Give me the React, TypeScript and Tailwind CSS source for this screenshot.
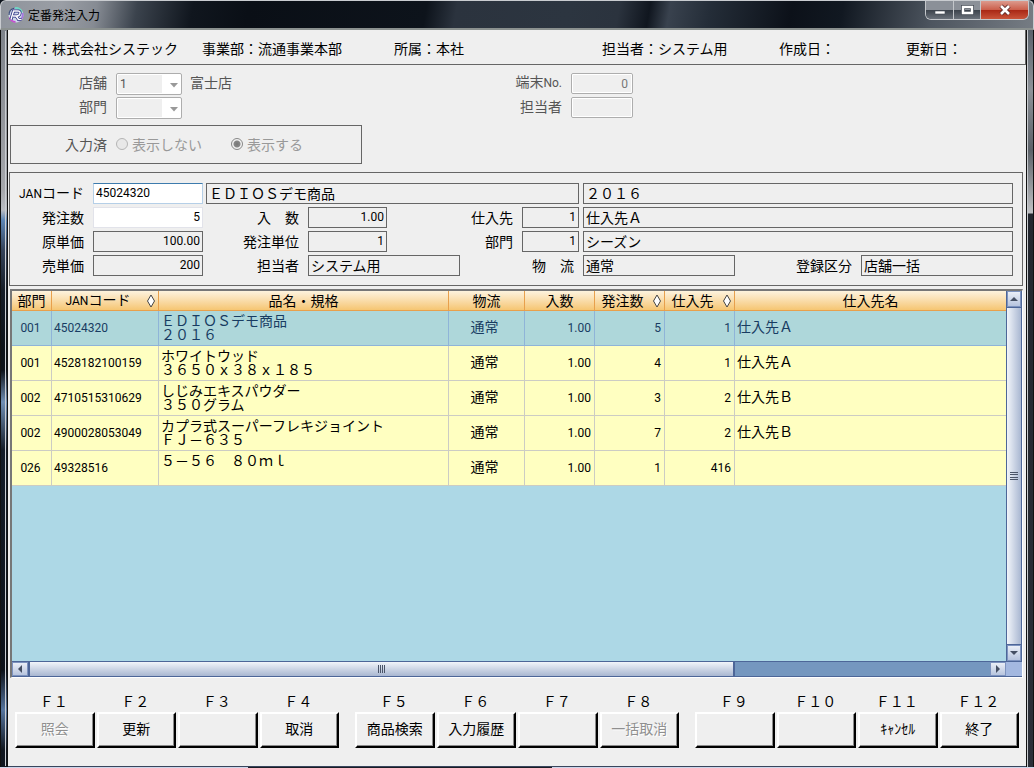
import type { ReactNode } from 'react'

type Row = {
  dept: string
  jan: string
  name: string
  spec: string
  route: string
  pack: string
  qty: string
  supplier: string
  supplierName: string
}

type FunctionKey = { key: string; label?: string; disabled?: boolean }

const rows: Row[] = [
  { dept: '001', jan: '45024320', name: 'ＥＤＩＯＳデモ商品', spec: '２０１６', route: '通常', pack: '1.00', qty: '5', supplier: '1', supplierName: '仕入先Ａ' },
  { dept: '001', jan: '4528182100159', name: 'ホワイトウッド', spec: '３６５０ｘ３８ｘ１８５', route: '通常', pack: '1.00', qty: '4', supplier: '1', supplierName: '仕入先Ａ' },
  { dept: '002', jan: '4710515310629', name: 'しじみエキスパウダー', spec: '３５０グラム', route: '通常', pack: '1.00', qty: '3', supplier: '2', supplierName: '仕入先Ｂ' },
  { dept: '002', jan: '4900028053049', name: 'カプラ式スーパーフレキジョイント', spec: 'ＦＪ－６３５', route: '通常', pack: '1.00', qty: '7', supplier: '2', supplierName: '仕入先Ｂ' },
  { dept: '026', jan: '49328516', name: '５－５６　８０ｍｌ', spec: '', route: '通常', pack: '1.00', qty: '1', supplier: '416', supplierName: '' },
]

const columns = [
  { label: '部門' },
  { label: 'JANコード', sortable: true },
  { label: '品名・規格' },
  { label: '物流' },
  { label: '入数' },
  { label: '発注数', sortable: true },
  { label: '仕入先', sortable: true },
  { label: '仕入先名' },
]

const functionKeys: FunctionKey[][] = [
  [{ key: 'Ｆ１', label: '照会', disabled: true }, { key: 'Ｆ２', label: '更新' }, { key: 'Ｆ３' }, { key: 'Ｆ４', label: '取消' }],
  [{ key: 'Ｆ５', label: '商品検索' }, { key: 'Ｆ６', label: '入力履歴' }, { key: 'Ｆ７' }, { key: 'Ｆ８', label: '一括取消', disabled: true }],
  [{ key: 'Ｆ９' }, { key: 'Ｆ１０' }, { key: 'Ｆ１１', label: 'ｷｬﾝｾﾙ' }, { key: 'Ｆ１２', label: '終了' }],
]

const num = "font-['Roboto',sans-serif] text-[12px]"
const wideInput = 'h-[21px] border border-[#666] px-0.5 pb-0.5'

function App() {
  return (
    <div className="flex min-h-screen flex-col bg-[#0d131b] font-['Noto_Sans_CJK_JP',sans-serif] text-[14px] leading-[14px] text-black">
      <TitleBar />
      <div className="flex flex-1">
        <div className="w-2 border-x border-[#111] bg-[linear-gradient(to_bottom,#7d828a_0px,#a5a7ab_160px,#b9bcc2_180px,#5d86b5_190px,#34435a_220px,#161d28_260px,#0c1119_320px,#0c1119_340px,#6f8eb4_372px,#141c28_420px,#0c1119_640px,#55749e_680px,#10161f_720px)] p-px">
          <div className="h-full border-r border-[#c9ccd0]" />
        </div>
        <main className="flex min-w-0 flex-1 flex-col border-b border-[#39455c] bg-[#efefef]">
          <CompanyBar />
          <StoreFilter />
          <ItemForm />
          <OrderTable />
          <FunctionBar />
        </main>
        <div className="flex w-2 border-x border-[#111] bg-[linear-gradient(to_bottom,#5a626b_0px,#8d9299_60px,#5c6269_120px,#c0c1c4_183px,#23272f_184px,#2b2f38_100%)]">
          <div className="w-px bg-[#c9ccd0]" />
        </div>
      </div>
      <div className="flex h-px bg-[#cdd6ea] pl-[248px]">
        <div className="w-[304px] bg-[#1a1d26]" />
      </div>
    </div>
  )
}

function TitleBar() {
  return (
    <header className="flex h-[30px] items-start rounded-t-md border border-b-2 border-[#c9ccd0] border-b-[#8b918f] bg-[linear-gradient(100deg,#8f949c_0px,#9a9ea5_60px,#868b93_95px,#3b434d_135px,#10161e_190px,#0a0f16_245px,#0d131b_420px,#2b333e_450px,#2c3540_560px,#2b333e_610px,#10161f_640px,#39424e_660px,#242d38_700px,#0c1119_780px,#111821_830px,#4d555f_920px,#7b8188_1034px)]">
      <div className="flex h-7 flex-1 items-center gap-1 pl-[7px]">
        <AppIcon />
        <h1 className="text-[12px] leading-4">定番発注入力</h1>
      </div>
      <div className="mr-1 flex h-[19px] overflow-hidden rounded-b-md border border-t-0 border-[#c3c6ca]">
        <button type="button" aria-label="最小化" className="flex w-7 items-center justify-center border-r border-[#c3c6ca] bg-[linear-gradient(#8b9098_50%,#3b424b_50%,#6a717a)]">
          <svg width="14" height="12" viewBox="0 0 14 12"><path d="M2 7h10v3H2z" fill="#fff" stroke="#454b55" strokeWidth=".6" /></svg>
        </button>
        <button type="button" aria-label="最大化" className="flex w-[27px] items-center justify-center border-r border-[#c3c6ca] bg-[linear-gradient(#8b9098_50%,#3b424b_50%,#6a717a)]">
          <svg width="14" height="12" viewBox="0 0 14 12">
            <path d="M3 3h9v6H3z" fill="none" stroke="#454b55" strokeWidth="4" />
            <path d="M3 3h9v6H3z" fill="none" stroke="#fff" strokeWidth="2.400" />
          </svg>
        </button>
        <button type="button" aria-label="閉じる" className="flex w-[47px] items-center justify-center bg-[linear-gradient(#dc9a8d_0%,#cb5d49_50%,#a82614_50%,#c9543a)]">
          <svg width="14" height="12" viewBox="0 0 14 12">
            <path d="M3 2l8 8M11 2l-8 8" stroke="#5b2a28" strokeWidth="4.500" />
            <path d="M3 2l8 8M11 2l-8 8" stroke="#fff" strokeWidth="2.600" />
          </svg>
        </button>
      </div>
    </header>
  )
}

function AppIcon() {
  return (
    <svg width="16" height="16" viewBox="0 0 16 16" aria-hidden="true">
      <circle cx="8" cy="8" r="7.500" fill="#cfd9ea" />
      <path d="M1 8a7 7 0 0 1 5.500-6.800" fill="none" stroke="#3d4f7c" strokeWidth="1.200" />
      <path d="M7 1a7 7 0 0 1 7 4.500" fill="none" stroke="#6fd6c4" strokeWidth="1.800" />
      <path d="M14.500 6a7 7 0 0 1-4 8" fill="none" stroke="#a678e0" strokeWidth="2" />
      <path d="M1.500 10.500a7 7 0 0 0 6 4.500" fill="none" stroke="#c44fd0" strokeWidth="1.800" />
      <path d="M3 12.500L5.500 4H10q2.500 0 2 2.500T8.500 9H5M8 9l2.500 3.500h3" fill="none" stroke="#23277d" strokeWidth="3" />
      <path d="M3 12.500L5.500 4H10q2.500 0 2 2.500T8.500 9H5M8 9l2.500 3.500h3" fill="none" stroke="#fff" strokeWidth="1.500" />
    </svg>
  )
}

function CompanyBar() {
  return (
    <div className="grid h-[35px] grid-cols-[192px_192px_208px_177px_127px_1fr] items-center border-r border-b border-[#666] pt-0.5 pl-0.5 whitespace-nowrap">
      <span>会社：株式会社システック</span>
      <span>事業部：流通事業本部</span>
      <span>所属：本社</span>
      <span>担当者：システム用</span>
      <span>作成日：</span>
      <span>更新日：</span>
    </div>
  )
}

function StoreFilter() {
  return (
    <section className="px-0.5 pt-2 text-[#555]">
      <div className="flex">
        <div className="w-[463px] space-y-0.5">
          <div className="flex items-center">
            <label htmlFor="store" className="w-[97px] pb-1 text-right">店舗</label>
            <DisabledSelect id="store" value="1" />
            <span className="ml-2 pb-1">富士店</span>
          </div>
          <div className="flex items-center">
            <label htmlFor="filter-dept" className="w-[97px] pb-1 text-right">部門</label>
            <DisabledSelect id="filter-dept" value="" />
          </div>
        </div>
        <div className="space-y-[3px]">
          <div className="flex items-center">
            <label htmlFor="terminal" className="w-[89px] pb-1 text-right">端末<span className={num}>No.</span></label>
            <input id="terminal" disabled defaultValue="0" className={`${num} ml-[9px] h-[21px] w-[62px] rounded-xs border border-[#adadad] px-1 text-right text-[#777] outline-1 -outline-offset-2 outline-white`} />
          </div>
          <div className="flex items-center">
            <label htmlFor="terminal-user" className="w-[89px] pb-1 text-right">担当者</label>
            <input id="terminal-user" disabled className="ml-[9px] h-[21px] w-[62px] rounded-xs border border-[#adadad] px-1 outline-1 -outline-offset-2 outline-white" />
          </div>
        </div>
      </div>

      <fieldset disabled className="mt-1.5 flex h-[39px] w-[352px] items-center border border-[#666] pb-0.5">
        <span className="w-24 text-right">入力済</span>
        <label className="ml-[9px] flex w-[115px] items-center gap-1 text-[#999]">
          <DisabledRadio />
          表示しない
        </label>
        <label className="flex items-center gap-1 text-[#999]">
          <DisabledRadio checked />
          表示する
        </label>
      </fieldset>
    </section>
  )
}

function DisabledSelect({ id, value }: { id: string; value: string }) {
  return (
    <div className="relative ml-[9px]">
      <select id={id} disabled defaultValue={value} className="block h-[22px] w-[66px] appearance-none rounded-xs border border-[#adadad] bg-white p-0.5 text-transparent opacity-100">
        <option value={value}>{value}</option>
      </select>
      <div className="pointer-events-none absolute top-0.5 left-0.5 flex h-[18px] w-11 items-center bg-[#efefef] pl-0.5">
        <span aria-hidden="true" className={num}>{value}</span>
      </div>
      <svg className="pointer-events-none absolute top-2.5 right-1" width="8" height="5" viewBox="0 0 8 5"><path d="M0 0h8L4 4.500z" fill="#999" /></svg>
    </div>
  )
}

function DisabledRadio({ checked = false }: { checked?: boolean }) {
  return (
    <input
      type="radio"
      name="entered"
      defaultChecked={checked}
      className="size-3 appearance-none rounded-full border border-[#b5b5b5] bg-[#e8e8e8] checked:border-[#888] checked:bg-[radial-gradient(circle,#777_0px,#888_3px,#f2f2f2_4px)]"
    />
  )
}

function ItemForm() {
  return (
    <section className="mt-2 mr-[3px] ml-px space-y-[3px] border border-[#666] pt-2.5 pr-[9px] pb-[9px] whitespace-nowrap">
      <div className="flex">
        <Field id="jan" labelClass="w-[74px]" boxClass="w-[110px]" label={<><span className={num}>JAN</span>コード</>} value="45024320" numeric editable focused />
        <input aria-label="商品名" readOnly defaultValue="ＥＤＩＯＳデモ商品" className={`${wideInput} ml-[3px] w-[373px]`} />
        <input aria-label="規格" readOnly defaultValue="２０１６" className={`${wideInput} ml-1 min-w-0 flex-1`} />
      </div>
      <div className="flex">
        <Field id="qty" labelClass="w-[74px]" boxClass="w-[110px]" label="発注数" value="5" numeric right editable />
        <Field id="pack" labelClass="w-24" boxClass="w-[79px]" label="入　数" value="1.00" numeric right />
        <Field id="supplier" labelClass="w-[126px]" boxClass="w-[57px]" label="仕入先" value="1" numeric right />
        <input aria-label="仕入先名" readOnly defaultValue="仕入先Ａ" className={`${wideInput} ml-1 min-w-0 flex-1`} />
      </div>
      <div className="flex">
        <Field id="cost" labelClass="w-[74px]" boxClass="w-[110px]" label="原単価" value="100.00" numeric right />
        <Field id="unit" labelClass="w-24" boxClass="w-[79px]" label="発注単位" value="1" numeric right />
        <Field id="dept" labelClass="w-[126px]" boxClass="w-[57px]" label="部門" value="1" numeric right />
        <input aria-label="部門名" readOnly defaultValue="シーズン" className={`${wideInput} ml-1 min-w-0 flex-1`} />
      </div>
      <div className="flex">
        <Field id="price" labelClass="w-[74px]" boxClass="w-[110px]" label="売単価" value="200" numeric right />
        <Field id="staff" labelClass="w-24" boxClass="w-[152px]" label="担当者" value="システム用" />
        <Field id="route" labelClass="w-[114px]" boxClass="w-[152px]" label="物　流" value="通常" />
        <div className="flex flex-1 justify-end">
          <Field id="kind" labelClass="w-20" boxClass="w-[152px]" label="登録区分" value="店舗一括" />
        </div>
      </div>
    </section>
  )
}

type FieldProps = {
  id: string
  label: ReactNode
  value: string
  labelClass: string
  boxClass: string
  numeric?: boolean
  right?: boolean
  editable?: boolean
  focused?: boolean
}

function Field({ id, label, value, labelClass, boxClass, numeric, right, editable, focused }: FieldProps) {
  const border = focused ? 'border-[#b5cfe7] border-t-[#3d7bad] bg-white' : editable ? 'border-[#e2e3ea] bg-white' : 'border-[#666]'
  return (
    <>
      <label htmlFor={id} className={`${labelClass} mr-[9px] self-center pb-0.5 text-right`}>{label}</label>
      <input
        id={id}
        readOnly={!editable}
        defaultValue={value}
        className={`${boxClass} ${border} ${numeric ? num : ''} ${right ? 'text-right' : ''} h-[21px] border px-0.5 pb-0.5`}
      />
    </>
  )
}

function OrderTable() {
  return (
    <section className="mt-[3px] mr-[3px] ml-0.5 flex h-[389px] flex-col border-t-2 border-r border-b border-l-2 border-t-[#777] border-r-white border-b-white border-l-[#777]">
      <div className="flex min-h-0 flex-1">
        <div className="min-w-0 flex-1 bg-[#add8e6]">
          <table className="w-full table-fixed border-separate border-spacing-0 whitespace-nowrap">
            <colgroup>
              <col className="w-10" />
              <col className="w-[107px]" />
              <col className="w-[290px]" />
              <col className="w-[76px]" />
              <col className="w-[70px]" />
              <col className="w-[70px]" />
              <col className="w-[70px]" />
              <col />
            </colgroup>
            <thead>
              <tr className="h-5 bg-linear-to-b from-[#fdf3de] to-[#f5c36b]">
                {columns.map((column) => (
                  <th key={column.label} className="border-r border-b border-[#e8a04c] p-0 font-normal last:border-r-0">
                    <div className="flex h-[18px] items-center justify-center pb-0.5">
                      <span className={column.sortable ? 'flex-1' : ''}>
                        {column.label === 'JANコード' ? <><span className={num}>JAN</span>コード</> : column.label}
                      </span>
                      {column.sortable && <SortMark />}
                    </div>
                  </th>
                ))}
              </tr>
            </thead>
            <tbody>
              {rows.map((row, index) => (
                <tr
                  key={row.jan}
                  className={index === 0 ? 'h-[35px] bg-[#aed7da] text-[#183c62] [&>td]:border-[#8fb4d8]' : 'h-[35px] bg-[#ffffc1] [&>td]:border-[#ccccc4]'}
                >
                  <td className={`${num} border-r border-b p-0 pr-0.5 text-center`}>{row.dept}</td>
                  <td className={`${num} border-r border-b p-0 pl-0.5`}>{row.jan}</td>
                  <td className="border-r border-b p-0 pl-0.5 align-top">
                    <div className="pt-0.5">{row.name}</div>
                    <div>{row.spec}</div>
                  </td>
                  <td className="border-r border-b p-0 pr-1 pb-1 text-center">{row.route}</td>
                  <td className={`${num} border-r border-b p-0 pr-[3px] text-right`}>{row.pack}</td>
                  <td className={`${num} border-r border-b p-0 pr-[3px] text-right`}>{row.qty}</td>
                  <td className={`${num} border-r border-b p-0 pr-[3px] text-right`}>{row.supplier}</td>
                  <td className="border-b p-0 pb-1 pl-0.5">{row.supplierName}</td>
                </tr>
              ))}
            </tbody>
          </table>
        </div>
        <div className="flex w-4 flex-col border-x border-[#4d6698] bg-[#7597bf]">
          <ScrollButton label="上へ" path="M3 9l4-4 4 4z" />
          <div className="flex flex-1 items-center justify-center border-y border-[#4d6698] bg-linear-to-r from-[#f2f5fa] to-[#a9b7d1]">
            <div className="flex h-2 w-2 flex-col justify-between">
              <div className="h-px bg-[#4a5468]" />
              <div className="h-px bg-[#4a5468]" />
              <div className="h-px bg-[#4a5468]" />
              <div className="h-px bg-[#4a5468]" />
            </div>
          </div>
          <ScrollButton label="下へ" path="M3 5l4 4 4-4z" />
        </div>
      </div>
      <div className="flex h-4 border-y border-[#4d6698] bg-[#7597bf]">
        <ScrollButton label="左へ" path="M9 3L5 7l4 4z" />
        <div className="flex w-[70%] items-center justify-center border-x-2 border-[#4d6698] bg-linear-to-b from-[#f2f5fa] to-[#a9b7d1]">
          <div className="flex h-2 w-2 justify-between">
            <div className="w-px bg-[#4a5468]" />
            <div className="w-px bg-[#4a5468]" />
            <div className="w-px bg-[#4a5468]" />
            <div className="w-px bg-[#4a5468]" />
          </div>
        </div>
        <div className="flex-1" />
        <ScrollButton label="右へ" path="M5 3l4 4-4 4z" />
        <div className="w-4 bg-[#a3b8e0]" />
      </div>
    </section>
  )
}

function SortMark() {
  return (
    <svg width="14" height="14" viewBox="0 0 14 14" aria-hidden="true">
      <path d="M7 2L10.500 8 7 14 3.500 8z" fill="#fff" stroke="#444" />
    </svg>
  )
}

function ScrollButton({ label, path }: { label: string; path: string }) {
  return (
    <button type="button" aria-label={label} className="flex h-full max-h-4 w-4 max-w-full items-center justify-center bg-linear-to-b from-[#eef2f9] to-[#b3c1dc] outline-1 -outline-offset-1 outline-[#7d93bf]">
      <svg width="14" height="14" viewBox="0 0 14 14"><path d={path} fill="#454f63" /></svg>
    </button>
  )
}

function FunctionBar() {
  return (
    <nav className="flex gap-4 pt-4 pr-[7px] pb-[18px] pl-[7px]">
      {functionKeys.map((group) => (
        <div key={group[0].key} className="grid flex-1 grid-cols-4 gap-x-0.5">
          {group.map((item) => (
            <div key={item.key}>
              <div className="mb-[3px] h-[15px] pr-0.5 text-center">{item.key}</div>
              <button
                type="button"
                aria-label={item.label ?? item.key}
                disabled={item.disabled}
                className="block h-9 w-full border-2 border-white border-r-black border-b-black pb-1 whitespace-nowrap shadow-[inset_-1px_-1px_0_#8a8a8a] disabled:text-[#8f8f8f] disabled:[text-shadow:1px_1px_0_#fff]"
              >
                {item.label}
              </button>
            </div>
          ))}
        </div>
      ))}
    </nav>
  )
}

export default App
